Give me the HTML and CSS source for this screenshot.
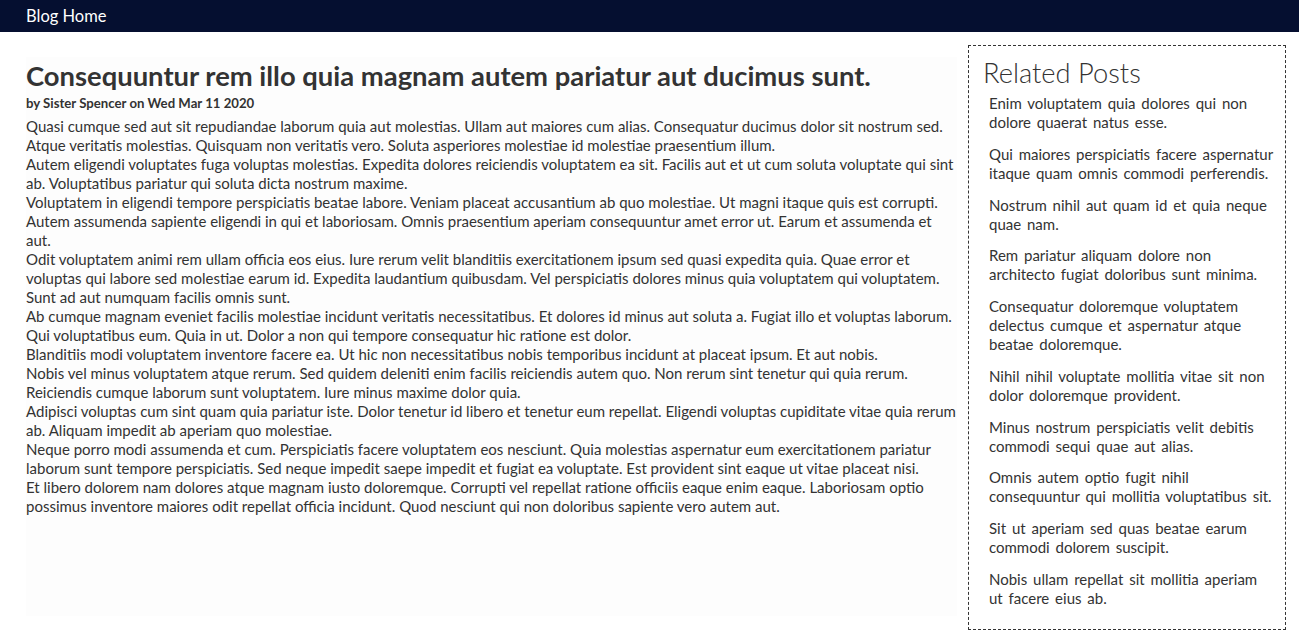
FILE: index.html
```html
<!DOCTYPE html>
<html lang="en">
<head>
<meta charset="utf-8">
<title>Blog</title>
<link rel="stylesheet" href="styles.css">
</head>
<body>
<nav class="topbar"><a class="home" href="#">Blog Home</a></nav>
<main class="layout">
  <article class="post">
    <h1 class="post-title">Consequuntur rem illo quia magnam autem pariatur aut ducimus sunt.</h1>
    <div class="byline">by Sister Spencer on Wed Mar 11 2020</div>
    <div class="post-body">
      <p>Quasi cumque sed aut sit repudiandae laborum quia aut molestias. Ullam aut maiores cum alias. Consequatur ducimus dolor sit nostrum sed. Atque veritatis molestias. Quisquam non veritatis vero. Soluta asperiores molestiae id molestiae praesentium illum.</p>
      <p>Autem eligendi voluptates fuga voluptas molestias. Expedita dolores reiciendis voluptatem ea sit. Facilis aut et ut cum soluta voluptate qui sint ab. Voluptatibus pariatur qui soluta dicta nostrum maxime.</p>
      <p>Voluptatem in eligendi tempore perspiciatis beatae labore. Veniam placeat accusantium ab quo molestiae. Ut magni itaque quis est corrupti. Autem assumenda sapiente eligendi in qui et laboriosam. Omnis praesentium aperiam consequuntur amet error ut. Earum et assumenda et aut.</p>
      <p>Odit voluptatem animi rem ullam officia eos eius. Iure rerum velit blanditiis exercitationem ipsum sed quasi expedita quia. Quae error et voluptas qui labore sed molestiae earum id. Expedita laudantium quibusdam. Vel perspiciatis dolores minus quia voluptatem qui voluptatem. Sunt ad aut numquam facilis omnis sunt.</p>
      <p>Ab cumque magnam eveniet facilis molestiae incidunt veritatis necessitatibus. Et dolores id minus aut soluta a. Fugiat illo et voluptas laborum. Qui voluptatibus eum. Quia in ut. Dolor a non qui tempore consequatur hic ratione est dolor.</p>
      <p>Blanditiis modi voluptatem inventore facere ea. Ut hic non necessitatibus nobis temporibus incidunt at placeat ipsum. Et aut nobis.</p>
      <p>Nobis vel minus voluptatem atque rerum. Sed quidem deleniti enim facilis reiciendis autem quo. Non rerum sint tenetur qui quia rerum. Reiciendis cumque laborum sunt voluptatem. Iure minus maxime dolor quia.</p>
      <p>Adipisci voluptas cum sint quam quia pariatur iste. Dolor tenetur id libero et tenetur eum repellat. Eligendi voluptas cupiditate vitae quia rerum ab. Aliquam impedit ab aperiam quo molestiae.</p>
      <p>Neque porro modi assumenda et cum. Perspiciatis facere voluptatem eos nesciunt. Quia molestias aspernatur eum exercitationem pariatur laborum sunt tempore perspiciatis. Sed neque impedit saepe impedit et fugiat ea voluptate. Est provident sint eaque ut vitae placeat nisi.</p>
      <p>Et libero dolorem nam dolores atque magnam iusto doloremque. Corrupti vel repellat ratione officiis eaque enim eaque. Laboriosam optio possimus inventore maiores odit repellat officia incidunt. Quod nesciunt qui non doloribus sapiente vero autem aut.</p>
    </div>
  </article>
  <aside class="related">
    <h2 class="related-title">Related Posts</h2>
    <ul class="related-list">
      <li>Enim voluptatem quia dolores qui non dolore quaerat natus esse.</li>
      <li>Qui maiores perspiciatis facere aspernatur itaque quam omnis commodi perferendis.</li>
      <li>Nostrum nihil aut quam id et quia neque quae nam.</li>
      <li>Rem pariatur aliquam dolore non architecto fugiat doloribus sunt minima.</li>
      <li>Consequatur doloremque voluptatem delectus cumque et aspernatur atque beatae doloremque.</li>
      <li>Nihil nihil voluptate mollitia vitae sit non dolor doloremque provident.</li>
      <li>Minus nostrum perspiciatis velit debitis commodi sequi quae aut alias.</li>
      <li>Omnis autem optio fugit nihil consequuntur qui mollitia voluptatibus sit.</li>
      <li>Sit ut aperiam sed quas beatae earum commodi dolorem suscipit.</li>
      <li>Nobis ullam repellat sit mollitia aperiam ut facere eius ab.</li>
    </ul>
  </aside>
</main>
</body>
</html>
```
FILE: styles.css
```css
* { box-sizing: border-box; }
html, body { margin: 0; padding: 0; }
body {
  font-family: Lato, "Open Sans", sans-serif;
  color: #333;
  background: #fff;
  height: 642px;
  overflow: hidden;
}
.topbar {
  height: 32px;
  background: #050f30;
  padding-left: 26px;
  display: flex;
  align-items: center;
}
.home {
  color: #fff;
  text-decoration: none;
  font-size: 16.5px;
  line-height: 32px;
}
.layout {
  display: flex;
  gap: 11px;
  padding: 0 13px 12px 26px;
  height: 610px;
}
.post {
  flex: 1;
  margin: 25px 0 14px;
  background: #fdfdfd;
}
.post-title {
  margin: 2px 0 0;
  font-size: 27.4px;
  line-height: 33px;
  font-weight: 700;
  color: #333;
}
.byline {
  margin-top: 2px;
  font-size: 13.2px;
  font-weight: 700;
  line-height: 19px;
}
.post-body { margin-top: 4px; }
.post-body p {
  margin: 0;
  font-size: 15px;
  line-height: 19px;
}
.related {
  width: 318px;
  flex: none;
  margin-top: 13px;
  border: 1px dashed #333;
  padding: 9px 9px 9px 14px;
}
.related-title {
  margin: 0;
  font-size: 27.3px;
  font-weight: 300;
  line-height: 36px;
}
.related-list {
  list-style: none;
  margin: 3px 0 0;
  padding: 0 0 0 6px;
}
.related-list li {
  font-size: 15px;
  line-height: 19px;
  word-spacing: 2px;
  margin-bottom: 12.75px;
}
```
